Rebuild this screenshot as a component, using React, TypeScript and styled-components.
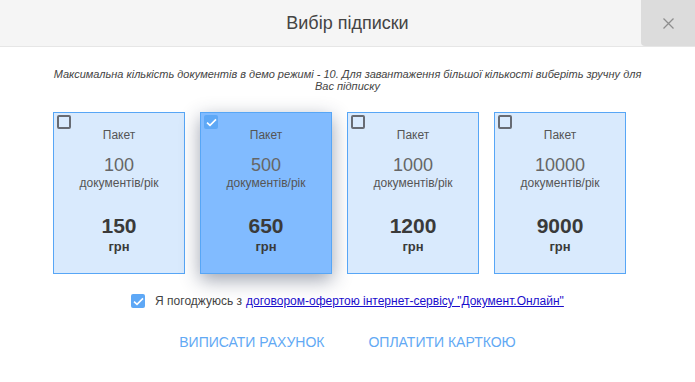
import React, { useState } from 'react';
import styled, { createGlobalStyle } from 'styled-components';

const GlobalStyle = createGlobalStyle`
  body {
    margin: 0;
    background: #fff;
    font-family: 'Liberation Sans', Arial, sans-serif;
  }
`;

const Modal = styled.div`
  width: 695px;
  height: 382px;
  display: flex;
  flex-direction: column;
  background: #fff;
`;

const Header = styled.div`
  position: relative;
  height: 46px;
  display: flex;
  align-items: center;
  justify-content: center;
  background: #f5f5f5;
  border-bottom: 1px solid #e6e6e6;
`;

const Title = styled.h1`
  margin: 0;
  font-size: 18px;
  font-weight: normal;
  color: #444;
`;

const CloseButton = styled.button`
  position: absolute;
  top: 0;
  right: 0;
  width: 54px;
  height: 46px;
  border: none;
  border-bottom-left-radius: 4px;
  background: #dcdcdc;
  display: flex;
  align-items: center;
  justify-content: center;
  cursor: pointer;
  padding: 0;
`;

const Description = styled.p`
  margin: 21px auto 0;
  width: 600px;
  text-align: center;
  font-size: 11px;
  line-height: 12px;
  font-style: italic;
  color: #444;
`;

const Plans = styled.div`
  display: flex;
  justify-content: center;
  gap: 15px;
  margin-top: 20px;
  padding-right: 16px;
`;

const Card = styled.div<{ $selected: boolean }>`
  position: relative;
  width: 132px;
  height: 162px;
  display: flex;
  flex-direction: column;
  align-items: center;
  padding-top: 15px;
  box-sizing: border-box;
  border: 1px solid #57a6f6;
  background: ${(p) => (p.$selected ? '#81bbff' : '#d9eafd')};
  box-shadow: ${(p) => (p.$selected ? '0 6px 18px rgba(40, 50, 80, 0.45)' : 'none')};
  cursor: pointer;
`;

const Box = styled.span<{ $checked: boolean }>`
  position: absolute;
  top: 2px;
  left: 3px;
  width: 14px;
  height: 14px;
  box-sizing: border-box;
  border-radius: 2px;
  display: flex;
  align-items: center;
  justify-content: center;
  border: ${(p) => (p.$checked ? 'none' : '2px solid #676b73')};
  background: ${(p) => (p.$checked ? '#5ea8f6' : 'transparent')};
`;

const AgreeBox = styled(Box)`
  position: static;
  flex: none;
`;

const Label = styled.div`
  font-size: 12px;
  line-height: 14px;
  color: #555;
`;

const Count = styled.div`
  margin-top: 13px;
  font-size: 18px;
  line-height: 20px;
  color: #666;
`;

const Units = styled.div`
  margin-top: 1px;
  font-size: 12px;
  line-height: 14px;
  color: #555;
`;

const Price = styled.div`
  margin-top: 24px;
  font-size: 21px;
  line-height: 24px;
  font-weight: bold;
  color: #3a3a3a;
`;

const Currency = styled.div`
  margin-top: 1px;
  font-size: 13px;
  line-height: 15px;
  font-weight: bold;
  color: #3a3a3a;
`;

const Agreement = styled.div`
  display: flex;
  align-items: center;
  justify-content: center;
  gap: 10px;
  margin-top: 20px;
  font-size: 12px;
  color: #444;
`;

const Link = styled.a`
  color: #1a0dcc;
  text-decoration: underline;
  margin-left: 4px;
`;

const Actions = styled.div`
  display: flex;
  justify-content: center;
  gap: 22px;
  margin-top: 22px;
`;

const ActionButton = styled.button`
  border: none;
  background: none;
  padding: 4px 11px;
  font-family: 'Liberation Sans', Arial, sans-serif;
  font-size: 14px;
  color: #62a9f4;
  text-transform: uppercase;
  cursor: pointer;
`;

function Check() {
  return (
    <svg width="11" height="9" viewBox="0 0 11 9" fill="none">
      <path d="M1 4.6 L4 7.4 L10 1.4" stroke="#fff" strokeWidth="1.6" />
    </svg>
  );
}

function Cross() {
  return (
    <svg width="11" height="11" viewBox="0 0 11 11" fill="none">
      <path d="M0.5 0.5 L10.5 10.5 M10.5 0.5 L0.5 10.5" stroke="#8e8e8e" strokeWidth="1.3" />
    </svg>
  );
}

const plans = [
  { count: '100', price: '150' },
  { count: '500', price: '650' },
  { count: '1000', price: '1200' },
  { count: '10000', price: '9000' },
];

export default function App() {
  const [selected, setSelected] = useState(1);
  const [agreed, setAgreed] = useState(true);

  return (
    <Modal>
      <GlobalStyle />
      <Header>
        <Title>Вибір підписки</Title>
        <CloseButton aria-label="Закрити">
          <Cross />
        </CloseButton>
      </Header>
      <Description>
        Максимальна кількість документів в демо режимі - 10. Для завантаження більшої кількості виберіть зручну для
        Вас підписку
      </Description>
      <Plans>
        {plans.map((plan, i) => (
          <Card key={plan.count} $selected={i === selected} onClick={() => setSelected(i)}>
            <Box $checked={i === selected}>{i === selected && <Check />}</Box>
            <Label>Пакет</Label>
            <Count>{plan.count}</Count>
            <Units>документів/рік</Units>
            <Price>{plan.price}</Price>
            <Currency>грн</Currency>
          </Card>
        ))}
      </Plans>
      <Agreement>
        <AgreeBox $checked={agreed} onClick={() => setAgreed(!agreed)}>
          {agreed && <Check />}
        </AgreeBox>
        <span>
          Я погоджуюсь з
          <Link href="#">договором-офертою інтернет-сервісу "Документ.Онлайн"</Link>
        </span>
      </Agreement>
      <Actions>
        <ActionButton>Виписати рахунок</ActionButton>
        <ActionButton>Оплатити карткою</ActionButton>
      </Actions>
    </Modal>
  );
}
